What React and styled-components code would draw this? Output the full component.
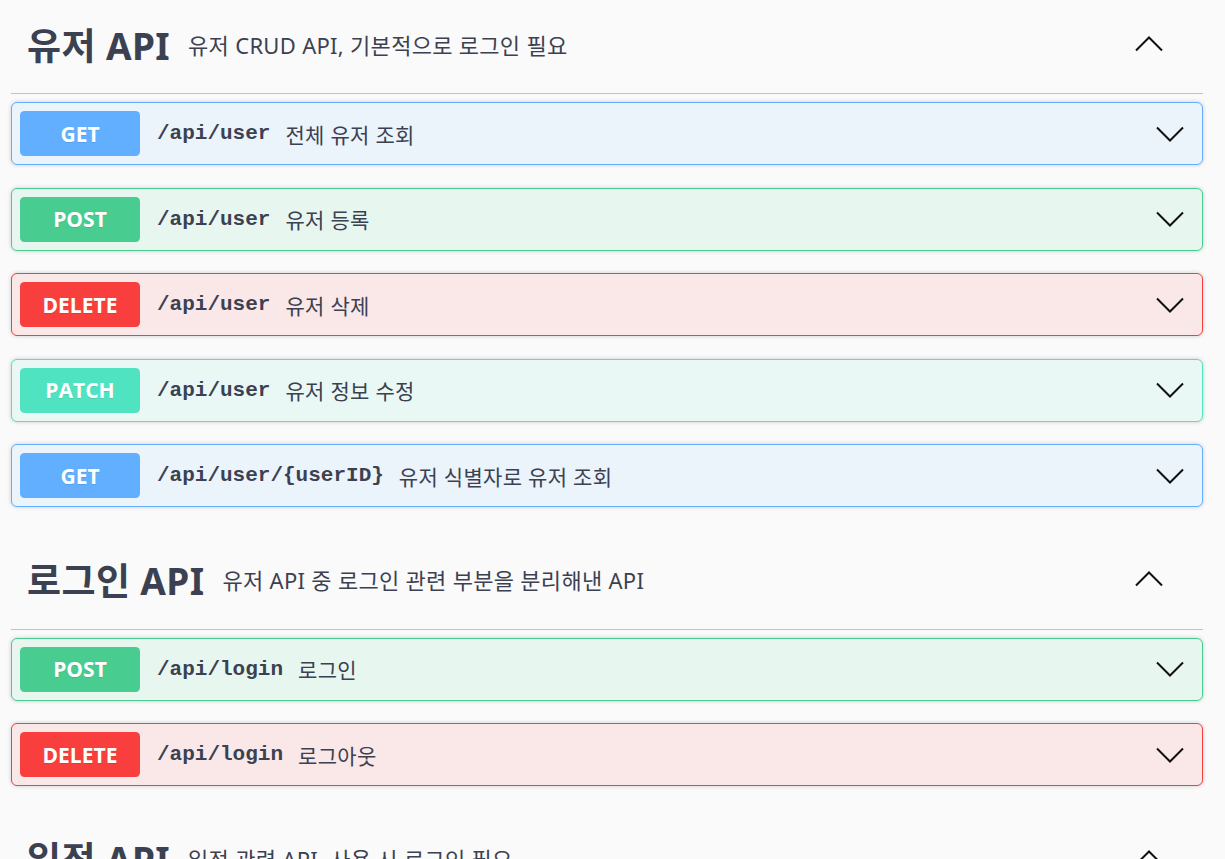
import * as React from 'react';
import styled, { createGlobalStyle } from 'styled-components';

const GlobalStyle = createGlobalStyle`
  html, body {
    margin: 0;
    padding: 0;
    background: #fafafa;
  }
  body {
    font-family: 'Noto Sans', 'Noto Sans CJK KR', sans-serif;
    color: #3b4151;
  }
`

const METHODS = {
  GET: { color: '#61affe', bg: '#ebf3fb' },
  POST: { color: '#49cc90', bg: '#e8f6f0' },
  DELETE: { color: '#f93e3e', bg: '#fae7e7' },
  PATCH: { color: '#50e3c2', bg: '#e9f8f5' },
}

const sections = [
  {
    name: '유저 API',
    desc: '유저 CRUD API, 기본적으로 로그인 필요',
    ops: [
      { method: 'GET', path: '/api/user', summary: '전체 유저 조회' },
      { method: 'POST', path: '/api/user', summary: '유저 등록' },
      { method: 'DELETE', path: '/api/user', summary: '유저 삭제' },
      { method: 'PATCH', path: '/api/user', summary: '유저 정보 수정' },
      { method: 'GET', path: '/api/user/{userID}', summary: '유저 식별자로 유저 조회' },
    ],
  },
  {
    name: '로그인 API',
    desc: '유저 API 중 로그인 관련 부분을 분리해낸 API',
    ops: [
      { method: 'POST', path: '/api/login', summary: '로그인' },
      { method: 'DELETE', path: '/api/login', summary: '로그아웃' },
    ],
  },
  {
    name: '일정 API',
    desc: '일정 관련 API, 사용 시 로그인 필요',
    ops: [],
  },
]

// page is scrolled a few px down in the reference
const Page = styled.div`
  margin: -6px 22px 0 11px;
`

const Section = styled.section`
  display: flex;
  flex-direction: column;
`

const TagHeader = styled.h3`
  display: flex;
  align-items: center;
  box-sizing: border-box;
  height: 100px;
  margin: 0 0 8px;
  padding: 0 30px 0 16px;
  border-bottom: 1px solid rgba(59, 65, 81, 0.3);
  cursor: pointer;
`

const TagName = styled.span`
  font-size: 37px;
  font-weight: 700;
  letter-spacing: 0.4px;
  white-space: nowrap;
`

const TagDesc = styled.small`
  flex: 1;
  margin-left: 18px;
  font-size: 22px;
  font-weight: 400;
  letter-spacing: 0.3px;
`

const Operation = styled.div`
  display: flex;
  align-items: center;
  box-sizing: border-box;
  height: 63px;
  margin-bottom: 22.5px;
  padding: 0 8px;
  border: 1px solid ${p => p.color};
  border-radius: 6px;
  background: ${p => p.bg};
  box-shadow: 0 0 4px rgba(0, 0, 0, 0.19);
  cursor: pointer;
`

const Badge = styled.span`
  display: flex;
  align-items: center;
  justify-content: center;
  flex: none;
  width: 120px;
  height: 45px;
  border-radius: 4.5px;
  background: ${p => p.color};
  color: #fff;
  font-family: 'Open Sans', 'Noto Sans', sans-serif;
  font-size: 21px;
  font-weight: 700;
  text-shadow: 0 1px 0 rgba(0, 0, 0, 0.1);
`

const Path = styled.span`
  padding: 0 15px 0 17px;
  font-family: 'Liberation Mono', 'DejaVu Sans Mono', monospace;
  font-size: 21px;
  font-weight: 700;
  white-space: nowrap;
`

const Summary = styled.span`
  flex: 1;
  font-size: 21px;
  letter-spacing: 0.3px;
  white-space: nowrap;
`

const Chevron = styled.svg`
  flex: none;
  margin-right: ${p => p.$mr}px;
`

const Arrow = ({ up, mr }) => (
  <Chevron $mr={mr} width="28" height="16" viewBox="0 0 28 16">
    <polyline
      points={up ? '1,14.5 14,1.5 27,14.5' : '1,1.5 14,14.5 27,1.5'}
      fill="none"
      stroke="#111"
      strokeWidth="2"
    />
  </Chevron>
)

const OpRow = ({ method, path, summary }) => {
  const m = METHODS[method]
  return (
    <Operation color={m.color} bg={m.bg}>
      <Badge color={m.color}>{method}</Badge>
      <Path>{path}</Path>
      <Summary>{summary}</Summary>
      <Arrow mr={10} />
    </Operation>
  )
}

export default function App() {
  return (
    <>
      <GlobalStyle />
      <Page>
        {sections.map(s => (
          <Section key={s.name}>
            <TagHeader>
              <TagName>{s.name}</TagName>
              <TagDesc>{s.desc}</TagDesc>
              <Arrow up mr={10} />
            </TagHeader>
            {s.ops.map((op, i) => (
              <OpRow key={i} {...op} />
            ))}
          </Section>
        ))}
      </Page>
    </>
  )
}
